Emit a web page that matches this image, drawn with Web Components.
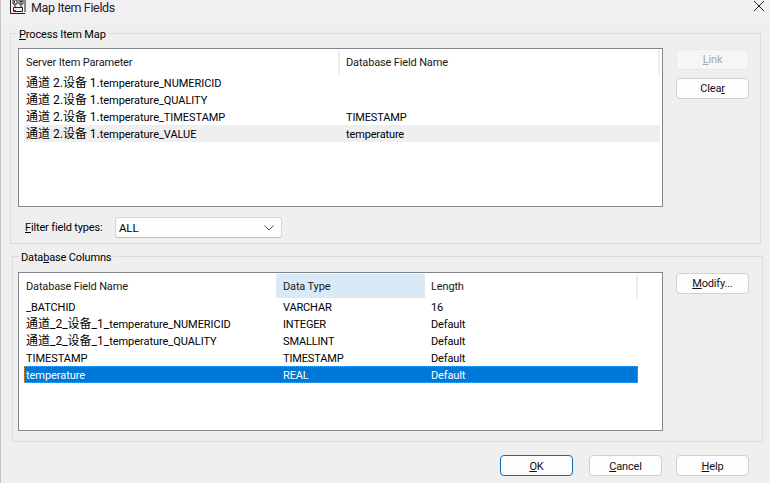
<!DOCTYPE html>
<html lang="en">
<head>
<meta charset="UTF-8"/>
<title>Map Item Fields</title>
<style>
    html, body { margin: 0; height: 100%; }
    body {
        background: #efefef;
        color: #000;
        font: 11px Roboto, "Noto Sans CJK SC", sans-serif;
        letter-spacing: -.15px;
    }
</style>
<script>
    // small helper so every element gets an open shadow root from a string
    function define(name, html) {
        customElements.define(name, class extends HTMLElement {
            constructor() {
                super();
                this.attachShadow({mode: "open"}).innerHTML = html;
            }
        });
    }

    define("title-bar", `
        <style>
            :host { display: flex; align-items: flex-start; height: 22px; background: #f3f0f4; padding-left: 9px; font-size: 12.5px; letter-spacing: -.35px; line-height: 15px; color: #222; }
            svg { display: block; flex: none; }
            .t { flex: 1; margin-left: 5px; }
            .x { margin: 1px 6px 0 0; }
        </style>
        <svg width="16" height="14" viewBox="0 0 16 14" fill="none" stroke="#222">
            <path d="M.5 0v13.500h14.500M15 12V0"/>
            <path d="M3 0h4v4H3zM9 0h4v4H9z" fill="#fff"/>
            <path d="M4.500 1v2M10 1.500h2M11 1v2" stroke="#111"/>
            <path d="M5 4v3M11 4v3M3.500 7.500h9v4h-9z"/>
            <path d="M4 10.500h2" stroke="#d22"/>
        </svg>
        <span class="t"><slot></slot></span>
        <svg class="x" width="10" height="10" viewBox="0 0 10 10" stroke="#222"><path d="M0 0l10 10M10 0L0 10"/></svg>
    `);

    define("group-box", `
        <style>
            :host { display: block; border: 1px solid #dcdcdc; position: relative; box-sizing: border-box; }
            .legend { position: absolute; top: -7px; left: 6px; padding: 0 2px; background: #efefef; line-height: 15px; }
        </style>
        <div class="legend"><slot name="legend"></slot></div>
        <slot></slot>
    `);

    define("list-view", `
        <style>
            :host { display: block; box-sizing: border-box; background: #fff; border: 1px solid #7f858c; border-bottom-color: #8a8a8a; padding: 1px 2px 0 5px; flex: none; }
        </style>
        <slot></slot>
    `);

    define("list-head", `
        <style>
            :host { display: grid; grid-template-columns: var(--cols); width: var(--w); height: 24px; }
        </style>
        <slot></slot>
    `);

    define("head-cell", `
        <style>
            :host { display: flex; align-items: center; padding: 1px 0 0 6px; box-sizing: border-box; border-right: 2px solid #eeeeee; color: #1a1a1a; }
            :host([first]) { padding-left: 2px; }
            :host([hot]) { background: #d9e9f6; border-right: 0; padding-left: 7px; }
            :host([plain]) { border-right: 0; }
        </style>
        <slot></slot>
    `);

    define("list-row", `
        <style>
            :host { display: grid; grid-template-columns: var(--cols); width: var(--w); height: 17px; align-items: center; white-space: nowrap; box-sizing: border-box; }
            :host([soft]) { background: #efefef; }
            :host([sel]) { background: #0078d7; color: #fff; outline: 1px dotted #e08a2a; outline-offset: -1px; }
            ::slotted(span) { padding: 2px 0 0 7px; line-height: 15px; }
            ::slotted(span:last-child) { padding-left: 6px; }
            ::slotted(span:first-child) { padding-left: 2px; letter-spacing: -.05px; }
        </style>
        <slot></slot>
    `);

    define("dlg-button", `
        <style>
            :host { display: flex; align-items: center; justify-content: center; box-sizing: border-box; width: 73px; height: 21px; background: #fdfdfd; border: 1px solid #d0d0d0; border-radius: 4px; flex: none; color: #111; }
            :host([off]) { background: #f6f6f6; border-color: #e9e9e9; color: #a6a6a6; }
            :host([main]) { border-color: #0f6cbd; }
        </style>
        <slot></slot>
    `);

    define("combo-box", `
        <style>
            :host { display: flex; align-items: center; box-sizing: border-box; width: 167px; height: 21px; padding: 0 7px 0 3px; background: #fdfdfd; border: 1px solid #d5d5d5; border-bottom-color: #bdbdbd; border-radius: 3px; font-size: 11.5px; }
            span { flex: 1; }
            svg { display: block; }
        </style>
        <span><slot></slot></span>
        <svg width="10" height="6" viewBox="0 0 10 6" fill="none" stroke="#555"><path d="M.5 .5l4.500 4.500 4.500-4.500"/></svg>
    `);

    define("map-dialog", `
        <style>
            :host { display: block; height: 483px; overflow: hidden; border-left: 1px solid #c4c4c4; box-sizing: border-box; }
            .content { padding: 11px 0 0 9px; }
            .g1 { width: 751px; height: 211px; --cols: 316px 320px; --w: 636px; }
            .g2 { width: 751px; height: 186px; margin: 12px 0 0 2px; --cols: 252px 149px 213px; --w: 614px; }
            .split { display: flex; }
            .g1 .split { padding: 14px 0 0 7px; }
            .g2 .split { padding: 15px 0 0 5px; }
            .side { display: flex; flex-direction: column; gap: 8px; margin: 1px 0 0 13px; }
            list-view { width: 645px; height: 159px; }
            .filter { display: flex; align-items: center; padding: 10px 0 0 14px; }
            .filter b { font-weight: 400; width: 90px; }
            .u { text-decoration: underline; }
            .cn { font-size: 12px; letter-spacing: 0; line-height: 15px; }
            .foot { display: flex; justify-content: flex-end; gap: 16px; padding: 13px 21px 0 0; }
            .foot dlg-button { padding-top: 1px; }
            .foot dlg-button:nth-child(3) { margin-left: -2px; }
        </style>
        <title-bar>Map Item Fields</title-bar>
        <div class="content">
            <group-box class="g1">
                <span slot="legend"><span class="u">P</span>rocess Item Map</span>
                <div class="split">
                    <list-view>
                        <list-head>
                            <head-cell first>Server Item Parameter</head-cell>
                            <head-cell>Database Field Name</head-cell>
                        </list-head>
                        <list-row><span><span class="cn">通道 2.设备 1.</span>temperature_NUMERICID</span><span></span></list-row>
                        <list-row><span><span class="cn">通道 2.设备 1.</span>temperature_QUALITY</span><span></span></list-row>
                        <list-row><span><span class="cn">通道 2.设备 1.</span>temperature_TIMESTAMP</span><span>TIMESTAMP</span></list-row>
                        <list-row soft><span><span class="cn">通道 2.设备 1.</span>temperature_VALUE</span><span>temperature</span></list-row>
                    </list-view>
                    <div class="side">
                        <dlg-button off><span><span class="u">L</span>ink</span></dlg-button>
                        <dlg-button><span>Clea<span class="u">r</span></span></dlg-button>
                    </div>
                </div>
                <div class="filter">
                    <b><span class="u">F</span>ilter field types:</b>
                    <combo-box>ALL</combo-box>
                </div>
            </group-box>
            <group-box class="g2">
                <span slot="legend">Data<span class="u">b</span>ase Columns</span>
                <div class="split">
                    <list-view>
                        <list-head>
                            <head-cell first plain>Database Field Name</head-cell>
                            <head-cell hot>Data Type</head-cell>
                            <head-cell>Length</head-cell>
                        </list-head>
                        <list-row><span>_BATCHID</span><span>VARCHAR</span><span>16</span></list-row>
                        <list-row><span><span class="cn">通道_2_设备_1_</span>temperature_NUMERICID</span><span>INTEGER</span><span>Default</span></list-row>
                        <list-row><span><span class="cn">通道_2_设备_1_</span>temperature_QUALITY</span><span>SMALLINT</span><span>Default</span></list-row>
                        <list-row><span>TIMESTAMP</span><span>TIMESTAMP</span><span>Default</span></list-row>
                        <list-row sel><span>temperature</span><span>REAL</span><span>Default</span></list-row>
                    </list-view>
                    <div class="side">
                        <dlg-button><span><span class="u">M</span>odify...</span></dlg-button>
                    </div>
                </div>
            </group-box>
            <div class="foot">
                <dlg-button main><span><span class="u">O</span>K</span></dlg-button>
                <dlg-button><span><span class="u">C</span>ancel</span></dlg-button>
                <dlg-button><span><span class="u">H</span>elp</span></dlg-button>
            </div>
        </div>
    `);
</script>
</head>
<body>
    <map-dialog></map-dialog>
</body>
</html>
